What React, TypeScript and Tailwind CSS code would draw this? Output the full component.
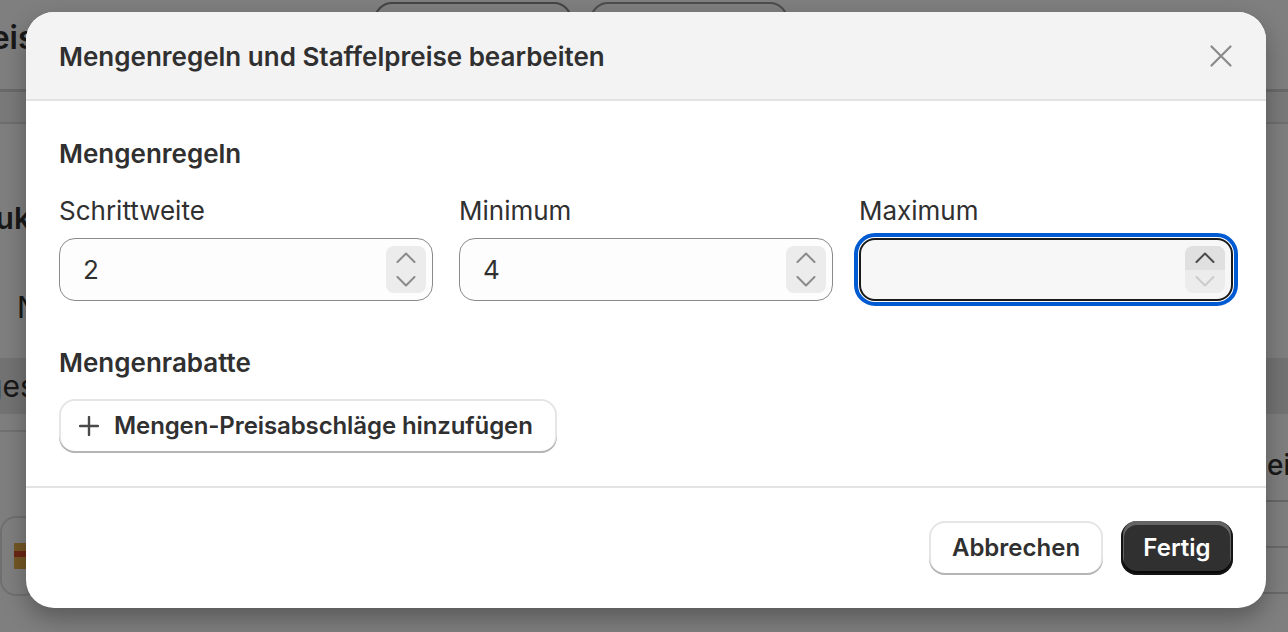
import React from 'react';

const Chevron = ({ up, className }: { up?: boolean; className: string }) => (
  <svg width="20" height="11" viewBox="0 0 20 11" fill="none" className={className}>
    <polyline
      points={up ? '1.5,10 10,1.5 18.5,10' : '1.5,1 10,9.5 18.5,1'}
      stroke="currentColor"
      strokeWidth="2"
      strokeLinecap="round"
      strokeLinejoin="round"
    />
  </svg>
);

const NumberField = ({ label, value, focused }: { label: string; value: string; focused?: boolean }) => (
  <div className="flex flex-col">
    <span className="text-[26px] leading-[36px] text-[#303030]">{label}</span>
    <div
      className={
        focused
          ? 'mt-[9px] flex h-[63px] items-center rounded-[16px] border-[2px] border-[#1a1a1a] bg-[#f7f7f7] pl-[22px] pr-[6px] outline outline-[4px] outline-offset-[1px] outline-[#005bd3]'
          : 'mt-[9px] flex h-[63px] items-center rounded-[16px] border-[1.5px] border-[#8a8a8a] bg-[#fdfdfd] pl-[23px] pr-[6px]'
      }
    >
      <span className="flex-1 text-[26px] text-[#303030]">{value}</span>
      <div className="flex h-[47px] w-[40px] flex-col overflow-hidden rounded-[8px] bg-[#ececec]">
        <div className={focused ? 'flex flex-1 items-center justify-center bg-[#e0e0e0]' : 'flex flex-1 items-center justify-center'}>
          <Chevron up className={focused ? 'text-[#4a4a4a]' : 'text-[#8a8a8a]'} />
        </div>
        <div className="flex flex-1 items-center justify-center">
          <Chevron className={focused ? 'text-[#cccccc]' : 'text-[#8a8a8a]'} />
        </div>
      </div>
    </div>
  </div>
);

const BackgroundPage = () => (
  <div className="flex h-full flex-col bg-white text-[#303030]">
    <div className="flex h-[92px] items-start border-b-[3px] border-[#d4d4d4]">
      <span className="-ml-[42px] mt-[14px] text-[32px] font-semibold">Preise</span>
      <div className="ml-[320px] mt-[2px] flex gap-[18px]">
        <div className="h-[50px] w-[198px] rounded-[18px] border-[2px] border-[#8a8a8a]" />
        <div className="h-[50px] w-[198px] rounded-[18px] border-[2px] border-[#9a9a9a]" />
      </div>
    </div>
    <div className="h-[32px] border-b-[2px] border-[#dcdcdc] bg-[#f4f4f4]" />
    <div className="flex h-[234px] flex-col">
      <span className="-ml-[72px] mt-[72px] text-[30px] font-semibold">Produkt</span>
      <span className="ml-[17px] mt-[44px] text-[30px]">Name</span>
    </div>
    <div className="flex h-[56px] items-center bg-[#e6e6e6]">
      <span className="-ml-[16px] text-[30px]">ges</span>
    </div>
    <div className="flex flex-1">
      <div className="flex w-[40px] flex-col">
        <div className="h-[18px] border-b-[2px] border-[#e2e2e2]" />
        <div className="mt-[84px] flex h-[80px] items-center rounded-[16px] border-[2px] border-[#e0e0e0]">
          <div className="ml-[12px] h-[26px] w-[20px] bg-[#e8b04a]">
            <div className="mt-[8px] h-[6px] w-[14px] bg-[#d94f2b]" />
          </div>
        </div>
      </div>
      <div className="flex-1" />
      <div className="flex w-[40px] flex-col">
        <span className="ml-[19px] mt-[30px] whitespace-nowrap text-[28px] font-medium">eich</span>
        <div className="mt-[14px] h-[2px] bg-[#cfcfcf]" />
        <div className="mt-[44px] h-[2px] bg-[#d4d4d4]" />
        <div className="mt-[44px] h-[2px] bg-[#d4d4d4]" />
      </div>
    </div>
  </div>
);

export default function App() {
  return (
    <div
      className="relative h-[632px] w-[1288px] overflow-hidden"
      style={{ fontFamily: 'Inter, "Noto Sans", sans-serif' }}
    >
      <BackgroundPage />
      <div className="absolute inset-0 bg-black/50" />

      <div className="absolute left-[26px] top-[12px] flex w-[1240px] flex-col overflow-hidden rounded-[28px] bg-white shadow-[0_10px_24px_rgba(0,0,0,0.3)]">
        {/* Header */}
        <div className="flex h-[89px] items-center justify-between border-b-[2px] border-[#e3e3e3] bg-[#f3f3f3] pl-[33px] pr-[25px]">
          <h2 className="mt-[2px] text-[26px] font-semibold leading-[40px] text-[#303030]">
            Mengenregeln und Staffelpreise bearbeiten
          </h2>
          <button className="flex h-[40px] w-[40px] items-center justify-center">
            <svg width="22" height="22" viewBox="0 0 22 22" fill="none">
              <path d="M1.5 1.5l19 19M20.5 1.5l-19 19" stroke="#8a8a8a" strokeWidth="2.2" strokeLinecap="round" />
            </svg>
          </button>
        </div>

        {/* Body */}
        <div className="flex flex-col px-[33px] pb-[33px] pt-[33px]">
          <h3 className="text-[26px] font-semibold leading-[40px] text-[#303030]">Mengenregeln</h3>
          <div className="mt-[19px] grid grid-cols-3 gap-[26px]">
            <NumberField label="Schrittweite" value="2" />
            <NumberField label="Minimum" value="4" />
            <NumberField label="Maximum" value="" focused />
          </div>
          <h3 className="mt-[42px] text-[26px] font-semibold leading-[40px] text-[#303030]">Mengenrabatte</h3>
          <div className="mt-[16px] flex">
            <button className="flex h-[54px] w-[498px] items-center gap-[15px] rounded-[16px] bg-white pl-[20px] text-[24px] font-semibold tracking-[-0.1px] text-[#303030] shadow-[inset_0_-2px_0_0_#b5b5b5,inset_0_0_0_2px_rgba(0,0,0,0.1)]">
              <svg width="20" height="20" viewBox="0 0 20 20" fill="none">
                <path d="M10 1v18M1 10h18" stroke="#4a4a4a" strokeWidth="2.4" strokeLinecap="round" />
              </svg>
              Mengen-Preisabschläge hinzufügen
            </button>
          </div>
        </div>

        {/* Footer */}
        <div className="flex justify-end gap-[18px] border-t-[2px] border-[#e3e3e3] px-[33px] pb-[33px] pt-[33px]">
          <button className="h-[54px] w-[174px] rounded-[16px] bg-white text-[24px] font-semibold text-[#303030] shadow-[inset_0_-2px_0_0_#b5b5b5,inset_0_0_0_2px_rgba(0,0,0,0.1)]">
            Abbrechen
          </button>
          <button className="h-[54px] w-[112px] rounded-[16px] bg-[#303030] text-[24px] font-semibold text-white shadow-[inset_0_-2px_0_2px_rgba(0,0,0,0.8),inset_0_1px_0_3px_rgba(255,255,255,0.25)]">
            Fertig
          </button>
        </div>
      </div>
    </div>
  );
}
